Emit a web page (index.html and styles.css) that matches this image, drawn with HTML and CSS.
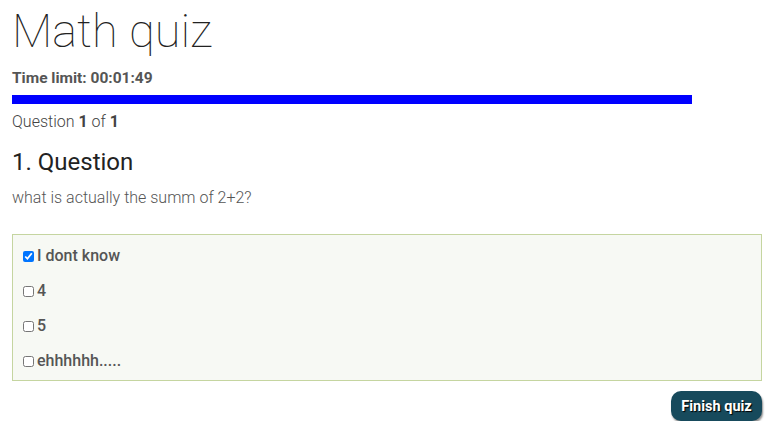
FILE: index.html
```html
<!DOCTYPE html>
<html>
<head>
<meta charset="utf-8">
<link rel="stylesheet" href="styles.css">
</head>
<body>
<div class="quiz">
  <h1 class="title">Math quiz</h1>
  <div class="timer">Time limit: 00:01:49</div>
  <div class="progress"><div class="progress-bar" style="width:680px"></div></div>
  <div class="counter">Question <b>1</b> of <b>1</b></div>
  <h3 class="q-title">1. Question</h3>
  <p class="q-text">what is actually the summ of 2+2?</p>
  <ul class="answers">
    <li class="answer"><label><input type="checkbox" checked> I dont know</label></li>
    <li class="answer"><label><input type="checkbox"> 4</label></li>
    <li class="answer"><label><input type="checkbox"> 5</label></li>
    <li class="answer"><label><input type="checkbox"> ehhhhhh.....</label></li>
  </ul>
  <div class="actions"><button class="finish">Finish quiz</button></div>
</div>
</body>
</html>
```
FILE: styles.css
```css
* { box-sizing: border-box; }
body {
  margin: 0;
  padding: 0 21px 0 12px;
  font-family: Roboto, "Liberation Sans", sans-serif;
  color: #555;
  background: #fff;
}
.quiz { width: 750px; }
.title {
  margin: 0;
  padding-top: 2px;
  font-size: 47px;
  font-weight: 100;
  line-height: 58px;
  color: #222;
}
.timer {
  margin-top: 9px;
  font-size: 15.5px;
  font-weight: 700;
  line-height: 18px;
  color: #555;
}
.progress {
  margin-top: 8px;
  height: 9px;
}
.progress-bar { height: 9px; background: #0000ff; }
.counter {
  margin-top: 9px;
  font-size: 16px;
  line-height: 18px;
  font-weight: 300;
  color: #444;
}
.counter b { font-weight: 700; color: #444; }
.q-title {
  margin: 17px 0 0;
  font-size: 24px;
  font-weight: 400;
  line-height: 28px;
  color: #222;
}
.q-text {
  margin: 13px 0 0;
  font-size: 16px;
  font-weight: 300;
  line-height: 18px;
  color: #555;
}
.answers {
  list-style: none;
  margin: 27px 0 0;
  padding: 3px 10px 2px;
  border: 1px solid #c5d5a0;
  background: #f7f9f4;
}
.answer {
  height: 35px;
  display: flex;
  align-items: center;
  font-size: 16px;
  font-weight: 500;
  color: #555;
}
.answer label { display: flex; align-items: center; }
.answer input {
  margin: 2px 3px 0 0;
  width: 11px;
  height: 11px;
}
.actions {
  display: flex;
  justify-content: flex-end;
  margin-top: 10px;
}
.finish {
  width: 91px;
  height: 30px;
  border: none;
  border-radius: 10px;
  background: #174a5c;
  color: #fff;
  font-family: Roboto, "Liberation Sans", sans-serif;
  font-size: 14.5px;
  font-weight: 700;
  text-shadow: 1px 1px 1px #000;
  box-shadow: 1px 2px 2px rgba(0,0,0,0.45);
  padding: 0;
}
```
